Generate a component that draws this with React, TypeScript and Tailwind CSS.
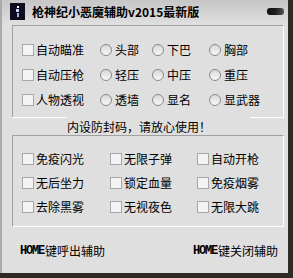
import React from "react";

const cjk = { fontFamily: '"Noto Sans CJK SC", "Noto Sans", sans-serif' };
const mono = { fontFamily: '"Liberation Mono", monospace' };

function Check({ label }: { label: string }) {
  return (
    <div className="flex items-center">
      <div className="w-[12px] h-[12px] border border-[#a8a8a8] bg-[#f4f4f4] shrink-0" />
      <span className="ml-[2px] text-[12px] leading-none text-black whitespace-nowrap" style={cjk}>{label}</span>
    </div>
  );
}

function Radio({ label }: { label: string }) {
  return (
    <div className="flex items-center">
      <div className="w-[12px] h-[12px] rounded-full border border-[#8a8a8a] bg-gradient-to-b from-[#d8d8d8] to-[#f8f8f8] shrink-0" />
      <span className="ml-[3px] text-[12px] leading-none text-black whitespace-nowrap" style={cjk}>{label}</span>
    </div>
  );
}

function HomeText({ rest }: { rest: string }) {
  return (
    <span className="text-[12px] leading-none text-black whitespace-nowrap flex items-center">
      <span className="text-[12px] tracking-[-1.2px] font-semibold" style={mono}>HOME</span>
      <span className="ml-[1px]" style={cjk}>{rest}</span>
    </span>
  );
}

export default function App() {
  return (
    <div className="w-[293px] h-[278px] bg-[#2e2a26] overflow-hidden">
      <div className="w-[288px] h-[273px] bg-[#dfdfdf] border-l-2 border-[#a9a9a9] flex flex-col">
        {/* title bar */}
        <div className="h-[28px] bg-gradient-to-b from-[#c6c6c6] to-[#dedede] flex items-center relative">
          <div className="ml-[8px] w-[15px] h-[17px] bg-[#0d0d1e] flex items-center justify-center">
            <div className="flex flex-col items-center gap-[1px]">
              <div className="w-[2px] h-[2px] bg-white" />
              <div className="w-[3px] h-[3px] bg-[#d0d0ff]" />
              <div className="w-[2px] h-[4px] bg-[#b0b0e0]" />
            </div>
          </div>
          <span className="ml-[7px] text-[12px] font-bold text-black leading-none" style={cjk}>枪神纪小恶魔辅助v2015最新版</span>
          <div className="ml-auto mr-[4px] w-[17px] h-[7px] rounded-[3px] bg-gradient-to-r from-[#111] via-[#1e1e1e] to-[#555]" />
        </div>
        {/* body */}
        <div className="pl-[10px] pr-[4px] pt-[2px] flex flex-col">
          {/* group 1 */}
          <div className="h-[92px] border-t border-l border-r border-t-[#a0a0a0] border-l-[#a0a0a0] border-r-white pt-[11px] pl-[9px]">
            {[
              ["自动瞄准", "头部", "下巴", "胸部"],
              ["自动压枪", "轻压", "中压", "重压"],
              ["人物透视", "透墙", "显名", "显武器"],
            ].map((r, i) => (
              <div key={i} className="h-[25px] grid grid-cols-[78px_52px_57px_1fr] items-center">
                <Check label={r[0]} />
                <Radio label={r[1]} />
                <Radio label={r[2]} />
                <Radio label={r[3]} />
              </div>
            ))}
          </div>
          {/* label row with split bottom border */}
          <div className="h-[18px] flex">
            <div className="w-[55px] border-t border-white" />
            <div className="w-[183px] flex items-center pt-[1px]">
              <span className="text-[12px] leading-none text-black" style={cjk}>内设防封码，请放心使用！</span>
            </div>
            <div className="flex-1 border-t border-white" />
          </div>
          {/* group 2 */}
          <div className="h-[92px] border border-t-[#a0a0a0] border-l-[#a0a0a0] border-r-white border-b-white pt-[11px] pl-[9px]">
            {[
              ["免疫闪光", "无限子弹", "自动开枪"],
              ["无后坐力", "锁定血量", "免疫烟雾"],
              ["去除黑雾", "无视夜色", "无限大跳"],
            ].map((r, i) => (
              <div key={i} className="h-[24px] grid grid-cols-[88px_87px_1fr] items-center">
                <Check label={r[0]} />
                <Check label={r[1]} />
                <Check label={r[2]} />
              </div>
            ))}
          </div>
          {/* footer */}
          <div className="h-[46px] flex items-center justify-between pl-[8px] pr-[6px] pt-[1px]">
            <HomeText rest="键呼出辅助" />
            <HomeText rest="键关闭辅助" />
          </div>
        </div>
      </div>
    </div>
  );
}
